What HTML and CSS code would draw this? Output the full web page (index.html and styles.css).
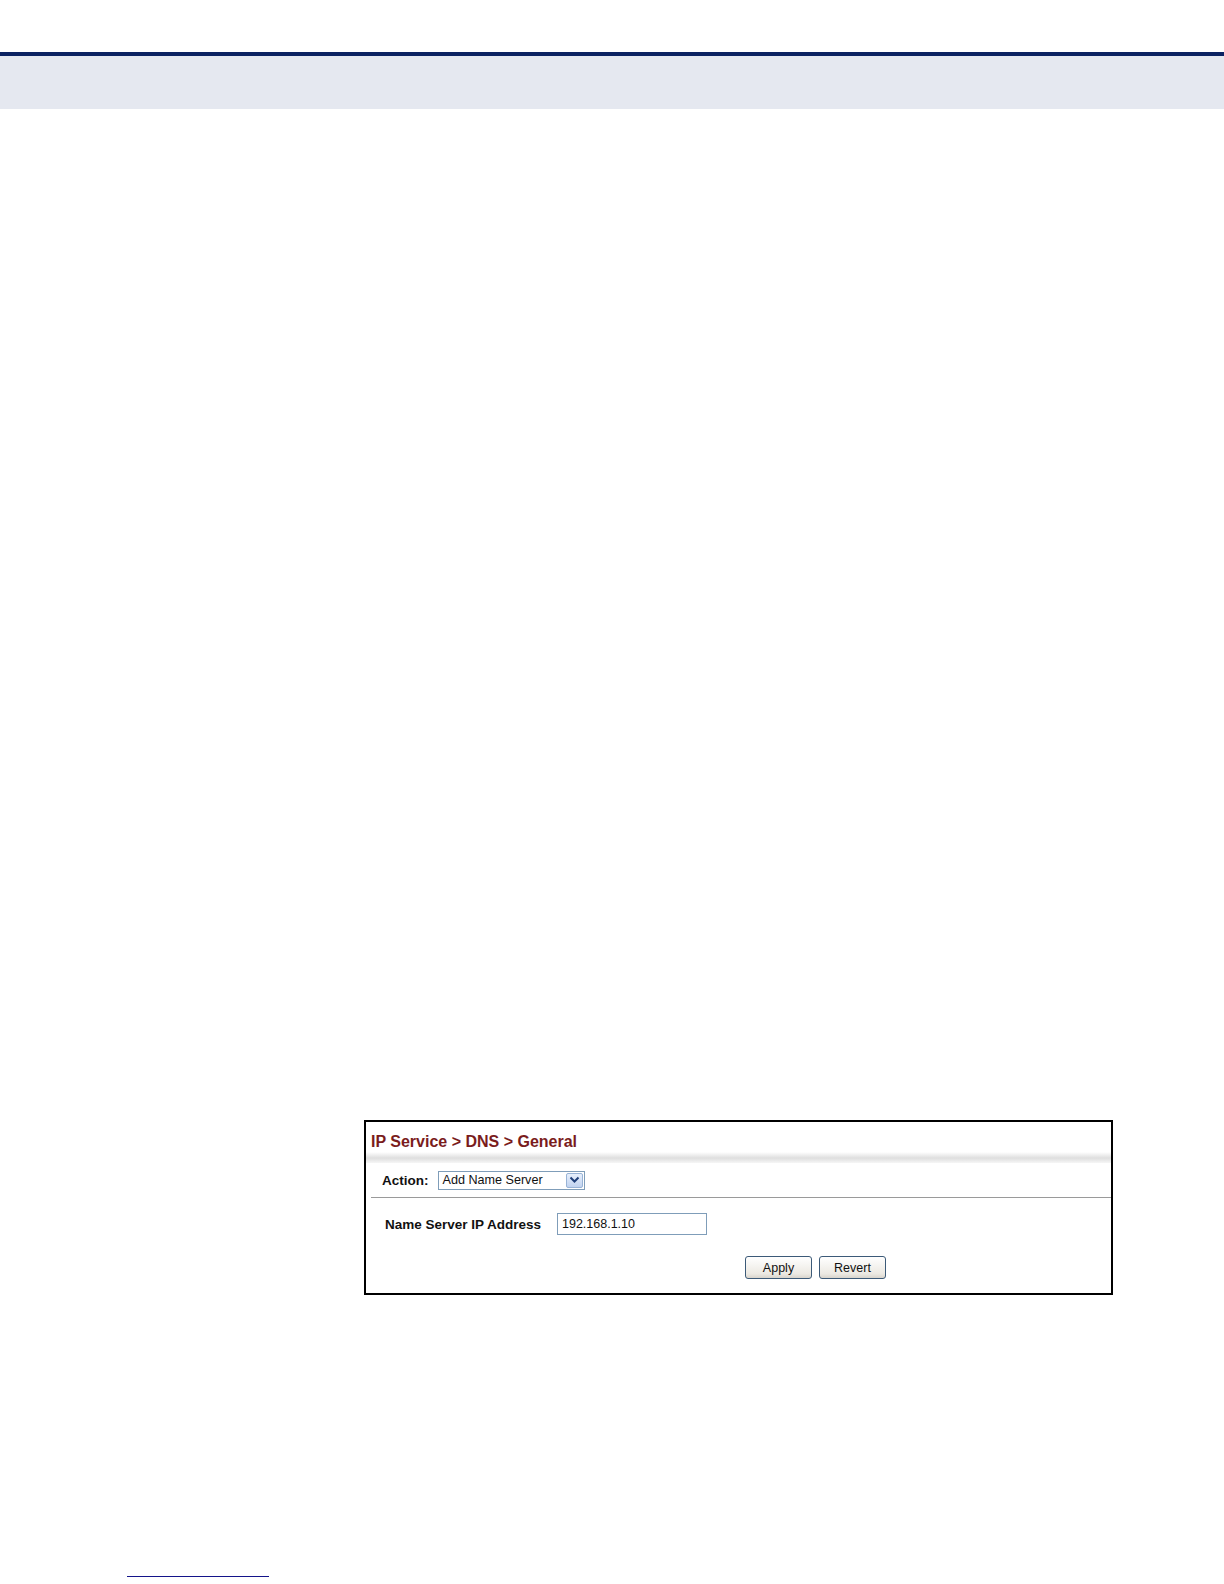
FILE: index.html
```html
<!DOCTYPE html>
<html>
<head>
<meta charset="utf-8">
<link rel="stylesheet" href="styles.css">
</head>
<body>
<header class="page-head">
  <div class="head-rule"></div>
  <div class="head-band"></div>
</header>
<main class="page-body">
  <div class="figure">
    <div class="panel">
      <div class="panel-title">IP Service &gt; DNS &gt; General</div>
      <div class="title-shade"></div>
      <div class="action-row">
        <span class="lbl">Action:</span>
        <div class="select">
          <span class="select-text">Add Name Server</span>
          <span class="select-btn">
            <svg width="11" height="8" viewBox="0 0 11 8"><path d="M1.5 1.5 L5.5 5.5 L9.5 1.5" fill="none" stroke="#1f3f7a" stroke-width="2"/></svg>
          </span>
        </div>
      </div>
      <div class="form-row">
        <span class="lbl lbl-wide">Name Server IP Address</span>
        <div class="input">192.168.1.10</div>
      </div>
      <div class="btn-row">
        <button class="btn">Apply</button>
        <button class="btn">Revert</button>
      </div>
    </div>
  </div>
</main>
<footer class="page-foot">
  <div class="foot-rule"></div>
</footer>
</body>
</html>
```
FILE: styles.css
```css
html, body {
  margin: 0;
  padding: 0;
  background: #ffffff;
}
body {
  width: 1224px;
  height: 1584px;
  font-family: "Liberation Sans", Arial, sans-serif;
  display: flex;
  flex-direction: column;
}
.page-head {
  padding-top: 52px;
}
.head-rule {
  height: 4px;
  background: #0b2262;
}
.head-band {
  height: 53px;
  background: #e5e8f0;
}
.page-body {
  flex: 1;
  padding-top: 1011px;
  padding-left: 364px;
}
.figure {
  width: 749px;
}
.panel {
  border: 2px solid #000;
  height: 171px;
  background: #fff;
  display: flex;
  flex-direction: column;
}
.panel-title {
  font-weight: bold;
  font-size: 16px;
  color: #7a1c1c;
  padding: 10px 0 0 5px;
  height: 20px;
  line-height: 20px;
}
.title-shade {
  height: 11px;
  background: linear-gradient(#ffffff, #dedede 55%, #f6f6f6);
}
.action-row {
  display: flex;
  align-items: center;
  gap: 9px;
  height: 34px;
  border-bottom: 1px solid #9a9a9a;
  margin-left: 5px;
  padding-left: 11px;
}
.lbl {
  font-weight: bold;
  font-size: 13.5px;
  color: #111;
}
.select {
  border: 1px solid #7f9db9;
  display: flex;
  align-items: center;
  justify-content: space-between;
  box-sizing: border-box;
  width: 147px;
  height: 19px;
}
.select-text {
  font-size: 12.6px;
  padding-left: 4px;
  color: #111;
}
.select-btn {
  width: 17px;
  height: 15px;
  margin-right: 1px;
  border: 1px solid #98b3d6;
  border-radius: 2px;
  background: linear-gradient(#e6effc, #c1d3f0);
  box-sizing: border-box;
  display: flex;
  align-items: center;
  justify-content: center;
}
.form-row {
  display: flex;
  align-items: center;
  padding-left: 19px;
  margin-top: 15px;
  height: 22px;
}
.lbl-wide {
  width: 172px;
}
.input {
  width: 150px;
  height: 22px;
  box-sizing: border-box;
  border: 1px solid #7f9db9;
  font-size: 12.5px;
  padding: 3px 0 0 4px;
  color: #111;
}
.btn-row {
  display: flex;
  gap: 7px;
  padding-left: 379px;
  margin-top: 21px;
}
.btn {
  width: 67px;
  height: 23px;
  border: 1px solid #3c5a78;
  border-radius: 3px;
  background: linear-gradient(#ffffff, #ece9e2 80%, #d8d4cc);
  font-family: "Liberation Sans", Arial, sans-serif;
  font-size: 12.5px;
  color: #111;
  padding: 0;
}
.page-foot {
  height: 8px;
  padding-left: 127px;
}
.foot-rule {
  width: 142px;
  height: 1px;
  background: #14148a;
}
```
